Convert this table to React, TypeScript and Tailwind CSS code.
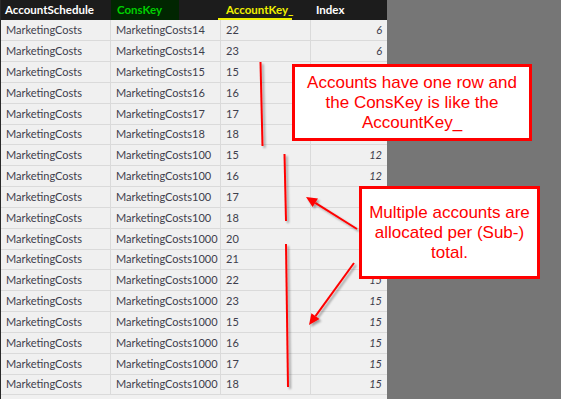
const rows: [string, string, string, string][] = [
  ["MarketingCosts", "MarketingCosts14", "22", "6"],
  ["MarketingCosts", "MarketingCosts14", "23", "6"],
  ["MarketingCosts", "MarketingCosts15", "15", ""],
  ["MarketingCosts", "MarketingCosts16", "16", ""],
  ["MarketingCosts", "MarketingCosts17", "17", ""],
  ["MarketingCosts", "MarketingCosts18", "18", ""],
  ["MarketingCosts", "MarketingCosts100", "15", "12"],
  ["MarketingCosts", "MarketingCosts100", "16", "12"],
  ["MarketingCosts", "MarketingCosts100", "17", ""],
  ["MarketingCosts", "MarketingCosts100", "18", ""],
  ["MarketingCosts", "MarketingCosts1000", "20", ""],
  ["MarketingCosts", "MarketingCosts1000", "21", ""],
  ["MarketingCosts", "MarketingCosts1000", "22", "15"],
  ["MarketingCosts", "MarketingCosts1000", "23", "15"],
  ["MarketingCosts", "MarketingCosts1000", "15", "15"],
  ["MarketingCosts", "MarketingCosts1000", "16", "15"],
  ["MarketingCosts", "MarketingCosts1000", "17", "15"],
  ["MarketingCosts", "MarketingCosts1000", "18", "15"],
];

function Callout({ className, lines }: { className: string; lines: string[] }) {
  return (
    <div
      className={`absolute flex flex-col items-center justify-center border-[3px] border-[#ff0000] bg-white text-center font-['Liberation_Sans',Arial,sans-serif] text-[17px] leading-[20px] text-[#ff0000] ${className}`}
    >
      {lines.map((l) => (
        <div key={l} className="whitespace-nowrap">{l}</div>
      ))}
    </div>
  );
}

function Annotations() {
  return (
    <svg className="pointer-events-none absolute left-0 top-0" width={561} height={399}>
      <defs>
        <filter id="sh" x="-50%" y="-50%" width="200%" height="200%">
          <feDropShadow dx="2" dy="2" stdDeviation="1" floodColor="#000" floodOpacity="0.35" />
        </filter>
      </defs>
      <g filter="url(#sh)" stroke="#ff0000" strokeWidth="2" fill="#ff0000">
        <line x1="260.5" y1="62" x2="262.5" y2="146" />
        <line x1="284.5" y1="154" x2="286" y2="221" />
        <line x1="286" y1="244" x2="288" y2="387" />
        <line x1="357" y1="229" x2="315.3" y2="202.9" />
        <polygon stroke="none" points="306,197 318,198.6 312.6,207.1" />
        <line x1="354" y1="263" x2="315.5" y2="316.1" />
        <polygon stroke="none" points="309,325 319.5,319 311.4,313.2" />
      </g>
    </svg>
  );
}

export default function App() {
  return (
    <div className="relative flex h-[399px] w-[561px] overflow-hidden bg-[#767676] font-['Lato','Noto_Sans',sans-serif] text-[11px]">
      <div className="w-[387px] shrink-0 border-l border-[#2a2a2a] bg-[#f0f0f0]">
        <div className="flex h-[20px] items-center bg-[#1c1c1c] text-[11.5px] font-bold">
          <div className="w-[110px] pl-[4px] text-white">AccountSchedule</div>
          <div className="w-[110px]">
            <span className="inline-flex h-[20px] w-[68px] items-center bg-[#012601] pl-[6px] text-[#00d000]">ConsKey</span>
          </div>
          <div className="relative flex h-[20px] w-[90px] items-center pl-[5px] text-[#f0f000]">
            AccountKey_
            <span className="absolute bottom-0 left-[-3px] h-[2px] w-[74px] bg-[#f0f000]" />
          </div>
          <div className="w-[76px] pl-[5px] text-white">Index</div>
        </div>
        {rows.map((r, i) => (
          <div
            key={i}
            className={`flex items-center border-b border-[#dadada] text-[#3e3e4c] ${i % 6 === 5 ? "h-[20px]" : "h-[21px]"}`}
          >
            <div className="flex h-full w-[110px] items-center border-r border-[#dadada] pl-[5px]">{r[0]}</div>
            <div className="flex h-full w-[110px] items-center border-r border-[#dadada] pl-[5px]">{r[1]}</div>
            <div className="flex h-full w-[90px] items-center border-r border-[#dadada] pl-[5px]">{r[2]}</div>
            <div className="flex h-full w-[76px] items-center justify-end pr-[5px] italic">{r[3]}</div>
          </div>
        ))}
      </div>
      <Callout
        className="left-[292px] top-[64px] h-[77px] w-[240px]"
        lines={["Accounts have one row and", "the ConsKey is like the", "AccountKey_"]}
      />
      <Callout
        className="left-[359px] top-[186px] h-[93px] w-[181px]"
        lines={["Multiple accounts are", "allocated per (Sub-)", "total."]}
      />
      <Annotations />
    </div>
  );
}
